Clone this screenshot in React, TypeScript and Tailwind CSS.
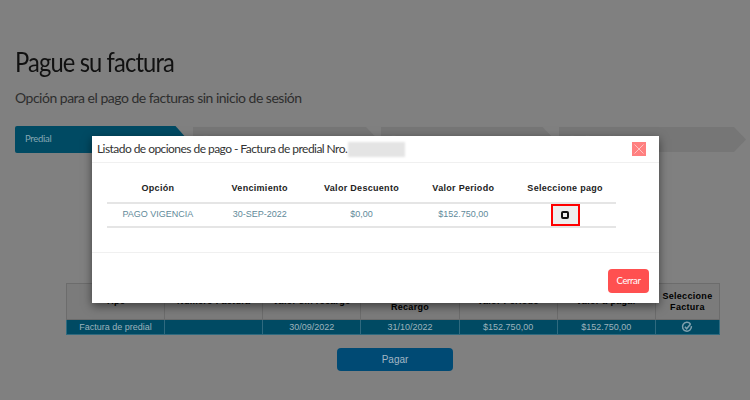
const headers = ["Tipo", "Número Factura", "Valor sin recargo", "Fecha Límite Recargo", "Valor Periodo", "Valor a pagar", "Seleccione Factura"];
const steps = [
  { label: "Predial", cls: "h-[27px] w-[173px] rounded-l-[2px] bg-[#004a63] text-[#86a8b4]" },
  { label: "Datos", cls: "h-[25px] w-[186px] bg-[#767676] text-[#7c7c7c]" },
  { label: "Pago", cls: "h-[25px] w-[174px] bg-[#767676] text-[#7c7c7c]" },
  { label: "Confirmación", cls: "h-[25px] w-[188px] bg-[#767676] text-[#7c7c7c]" },
];
const cellBorder = "border border-[#2f6a7f]";

function CheckCircle() {
  return (
    <svg width="12" height="12" viewBox="0 0 14 14" fill="none" className="mx-auto">
      <path d="M11 3.4A5.2 5.2 0 1 0 12.1 6" stroke="#7fa0ad" strokeWidth="1.8" />
      <path d="M4.6 6.6 6.6 9l4.6-5.6" stroke="#7fa0ad" strokeWidth="1.8" />
    </svg>
  );
}

export default function App() {
  return (
    <div className="relative h-[400px] w-[750px] overflow-hidden bg-[#808080]">
      <main className="pt-[43px] pl-[15px]">
        <h1 className="origin-left scale-x-[0.88] font-['Lato',sans-serif] text-[27px] leading-[38px] text-[#111] tracking-[-1px]">Pague su factura</h1>
        <p className="mt-[7px] font-['Lato',sans-serif] text-[14px] leading-[20px] text-[#2e2e2e] tracking-[-0.5px]">
          Opción para el pago de facturas sin inicio de sesión
        </p>

        <ol className="mt-[18px] flex items-center">
          {steps.map((step, i) => (
            <li
              key={step.label}
              className={`flex items-center pl-[10px] font-['Lato',sans-serif] text-[9.5px] tracking-[-0.3px] [clip-path:polygon(0_0,calc(100%-12px)_0,100%_50%,calc(100%-12px)_100%,0_100%)] ${step.cls} ${i === 0 ? "mr-[5px]" : i === 1 ? "mr-[3px]" : "mr-[4px]"}`}
            >
              {step.label}
            </li>
          ))}
        </ol>

        <table className="mt-[130px] ml-[51px] w-[654px] table-fixed border-collapse font-['Liberation_Sans',sans-serif] text-[9px]">
          <thead>
            <tr className="h-[36px] bg-[#7b7b7b]">
              {headers.map((h, i) => (
                <th
                  key={h}
                  className={`border border-[#6c6c6c] px-[2px] leading-[11px] font-bold text-black tracking-[0.3px] ${i === 6 ? "w-[64px]" : "w-[98px]"}`}
                >
                  {h}
                </th>
              ))}
            </tr>
          </thead>
          <tbody>
            <tr className="h-[15px] bg-[#004a63] text-center leading-[13px] text-[#9db3bc]">
              <td className={cellBorder}>Factura de predial</td>
              <td className={cellBorder}></td>
              <td className={cellBorder}>30/09/2022</td>
              <td className={cellBorder}>31/10/2022</td>
              <td className={cellBorder}>$152.750,00</td>
              <td className={cellBorder}>$152.750,00</td>
              <td className={cellBorder}><CheckCircle /></td>
            </tr>
          </tbody>
        </table>

        <button className="mt-[13px] ml-[322px] block h-[23px] w-[116px] rounded-[4px] bg-[#004a74] font-['Liberation_Sans',sans-serif] text-[10px] text-[#a3b6c4]">
          Pagar
        </button>
      </main>

      <section className="absolute top-[136px] left-[92px] h-[167px] w-[567px] bg-white shadow-[0_3px_9px_rgba(0,0,0,0.5)]">
        <header className="flex h-[27px] items-center justify-between border-b border-[#f0f0f0] pr-[13px] pl-[5px]">
          <h2 className="flex items-center font-['Lato',sans-serif] text-[12px] text-[#333] tracking-[-0.55px]">
            Listado de opciones de pago - Factura de predial Nro.
            <span className="ml-[1px] h-[15px] w-[57px] bg-[#e4e4e4] blur-[1px]"></span>
          </h2>
          <button className="flex h-[14px] w-[14px] items-center justify-center bg-[#ff8080]">
            <svg width="10" height="10" viewBox="0 0 10 10" stroke="#ffc4c4" strokeWidth="1">
              <path d="M0.5 0.5 9.5 9.5M9.5 0.5 0.5 9.5" />
            </svg>
          </button>
        </header>

        <div className="px-[15px] pt-[13px]">
          <table className="w-[509px] table-fixed border-collapse font-['Liberation_Sans',sans-serif] text-[9px]">
            <thead>
              <tr className="h-[27px] border-b-2 border-[#e5e5e5] text-[#222] tracking-[0.3px]">
                <th className="font-bold">Opción</th>
                <th className="font-bold">Vencimiento</th>
                <th className="font-bold">Valor Descuento</th>
                <th className="font-bold">Valor Periodo</th>
                <th className="font-bold">Seleccione pago</th>
              </tr>
            </thead>
            <tbody>
              <tr className="h-[22px] border-b-2 border-[#e5e5e5] text-center text-[#5f8a9a]">
                <td>PAGO VIGENCIA</td>
                <td>30-SEP-2022</td>
                <td>$0,00</td>
                <td>$152.750,00</td>
                <td>
                  <span className="mx-auto flex h-[22px] w-[29px] items-center justify-center border-[2.5px] border-[#f00] bg-[#eee]">
                    <span className="block h-[8px] w-[8px] rounded-[2px] border-2 border-[#111]"></span>
                  </span>
                </td>
              </tr>
            </tbody>
          </table>
        </div>

        <footer className="mt-[24px] flex justify-end border-t border-[#f0f0f0] pt-[16px] pr-[10px]">
          <button className="h-[24px] w-[41px] rounded-[4px] bg-[#ff5050] font-['Lato',sans-serif] text-[9.5px] tracking-[-0.4px] text-white">
            Cerrar
          </button>
        </footer>
      </section>
    </div>
  );
}
